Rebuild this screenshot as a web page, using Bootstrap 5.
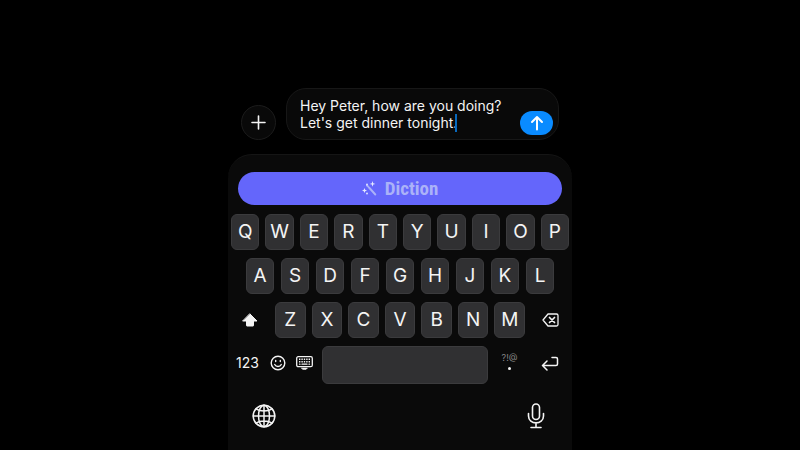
<!DOCTYPE html>
<html lang="en" data-bs-theme="dark">
<head>
<meta charset="utf-8">
<meta name="viewport" content="width=device-width, initial-scale=1">
<title>Diction keyboard</title>
<link href="https://cdn.jsdelivr.net/npm/bootstrap@5.3.0/dist/css/bootstrap.min.css" rel="stylesheet">
<style>
body { background: #000; color: #f4f4f4; font-family: Inter, "Liberation Sans", sans-serif; }
button { color: inherit; background: none; border: 0; padding: 0; }
svg { display: block; fill: none; stroke: currentColor; stroke-linecap: round; stroke-linejoin: round; }
.phone { max-width: 344px; padding-top: 88px; }
.composer { padding: 0 13px; gap: 10px; margin-bottom: 14px; }
.add-btn { width: 35px; height: 35px; background: #090909; border: 1px solid #1c1c1c; }
.bubble { background: #090909; border: 1px solid #171717; border-radius: 20px; padding: 8px 5px 4px 13px; }
.message { display: block; width: 100%; height: 38px; padding: 0; border: 0; outline: 0; resize: none; overflow: hidden; background: transparent; color: #f4f4f4; font-size: 14px; line-height: 17px; }
.caret { left: 168px; top: 25px; width: 2px; height: 18px; background: #0869bd; }
.send-btn { width: 33px; height: 24px; background: #0a8bff; color: #fff; }
.keyboard { background: #0a0a0a; border-top: 1px solid #151515; border-radius: 24px 24px 0 0; padding: 17px 3px 0; }
.diction-btn { height: 33px; margin: 0 7px 9px; gap: 8px; background: #6466fb; color: #abb2f8; font: bold 19px/31px "Liberation Sans Narrow", "Roboto Condensed", Roboto, sans-serif; }
.wand { fill: currentColor; stroke: none; }
.key-row { margin-bottom: 8px; gap: 6px; }
.key { flex: 1 1 0; min-width: 0; height: 36px; background: #303032; border: 1px solid #3b3b3d; border-radius: 6px; font-size: 19px; line-height: 34px; }
.home-row { padding: 0 15px; gap: 7px; }
.side-key { width: 38px; height: 36px; }
.shift-icon { fill: currentColor; }
.bottom-row { gap: 0; }
.num-key { width: 33px; font-size: 14px; line-height: 36px; }
.mini-key { width: 27px; height: 36px; }
.space-key { height: 38px; margin-left: 4px; }
.dot-key { width: 43px; height: 36px; }
.dot-hint { color: #858585; font-size: 9px; line-height: 10px; }
.dot-mark { width: 3px; height: 3px; background: #f4f4f4; margin-top: 4px; }
.bottom-row > button:not(.space-key) { padding-bottom: 4px; }
.bottom-row .num-key { line-height: 32px; }
.bottom-row > .dot-key { padding-bottom: 8px !important; }
.dock { padding: 11px 21px 18px; }
</style>
<script src="https://cdn.jsdelivr.net/npm/bootstrap@5.3.0/dist/js/bootstrap.bundle.min.js"></script>
</head>
<body>
<main class="phone mx-auto min-vh-100 d-flex flex-column">
  <form class="composer d-flex align-items-end">
    <button type="button" class="add-btn rounded-circle d-flex align-items-center justify-content-center flex-shrink-0" aria-label="Add attachment">
      <svg width="15" height="15" viewBox="0 0 15 15" stroke-width="1.6"><path d="M7.5 1v13M1 7.5h13"/></svg>
    </button>
    <div class="bubble position-relative flex-grow-1 d-flex align-items-end">
      <textarea class="message" aria-label="Message" spellcheck="false">Hey Peter, how are you doing?
Let's get dinner tonight.</textarea>
      <span class="caret position-absolute"></span>
      <button type="button" class="send-btn rounded-pill d-flex align-items-center justify-content-center flex-shrink-0" aria-label="Send">
        <svg width="14" height="16" viewBox="0 0 14 16" stroke-width="2"><path d="M7 14.5V2M2 7l5-5 5 5"/></svg>
      </button>
    </div>
  </form>
  <section class="keyboard flex-grow-1 d-flex flex-column" aria-label="Keyboard">
    <button type="button" class="diction-btn rounded-pill d-flex align-items-center justify-content-center">
      <svg class="wand" width="15" height="15" viewBox="0 0 15 15">
        <path d="M5 4.500l1.200 1.200M7 6.500l6.300 7" stroke="currentColor" stroke-width="1.900"/>
        <g fill="#e6eaff"><path d="M10.500 0l.7 2.200 2.200.7-2.200.7-.7 2.200-.7-2.200-2.200-.7 2.200-.7z"/><path d="M2.500 7l.7 1.800 1.800.7-1.800.7-.7 1.800-.7-1.800L0 9.500l1.800-.7z"/><circle cx="5" cy="12.500" r=".9"/><circle cx="5" cy="3.500" r=".9"/></g>
      </svg>
      <span>Diction</span>
    </button>
    <div class="key-row d-flex">
      <button type="button" class="key">Q</button><button type="button" class="key">W</button><button type="button" class="key">E</button><button type="button" class="key">R</button><button type="button" class="key">T</button><button type="button" class="key">Y</button><button type="button" class="key">U</button><button type="button" class="key">I</button><button type="button" class="key">O</button><button type="button" class="key">P</button>
    </div>
    <div class="key-row home-row d-flex">
      <button type="button" class="key">A</button><button type="button" class="key">S</button><button type="button" class="key">D</button><button type="button" class="key">F</button><button type="button" class="key">G</button><button type="button" class="key">H</button><button type="button" class="key">J</button><button type="button" class="key">K</button><button type="button" class="key">L</button>
    </div>
    <div class="key-row d-flex">
      <button type="button" class="side-key d-flex align-items-center justify-content-center" aria-label="Shift">
        <svg class="shift-icon" width="16" height="14" viewBox="0 0 16 14" stroke-width="1"><path d="M8 1l7 7h-3.500v4.500q0 .5-.5.5H5q-.5 0-.5-.5V8H1z"/></svg>
      </button>
      <button type="button" class="key">Z</button><button type="button" class="key">X</button><button type="button" class="key">C</button><button type="button" class="key">V</button><button type="button" class="key">B</button><button type="button" class="key">N</button><button type="button" class="key">M</button>
      <button type="button" class="side-key d-flex align-items-center justify-content-center" aria-label="Delete">
        <svg width="17" height="14" viewBox="0 0 17 14" stroke-width="1.300"><path d="M6 1h8.500q1.500 0 1.500 1.500v9q0 1.500-1.500 1.500H6L1 7z"/><path d="M7.500 4.500l5 5m0-5l-5 5" stroke-width="1.700"/></svg>
      </button>
    </div>
    <div class="key-row bottom-row d-flex align-items-center">
      <button type="button" class="num-key">123</button>
      <button type="button" class="mini-key d-flex align-items-center justify-content-center" aria-label="Emoji">
        <svg width="16" height="16" viewBox="0 0 16 16" stroke-width="1.400"><circle cx="8" cy="8" r="6.800"/><path d="M4.700 9.500c1.400 2.700 5.200 2.700 6.600 0M5.700 5.500v1M10.300 5.500v1"/></svg>
      </button>
      <button type="button" class="mini-key d-flex align-items-center justify-content-center" aria-label="Keyboard layout">
        <svg width="17" height="14" viewBox="0 0 17 14" stroke-width="1.300"><rect x=".7" y=".7" width="15.600" height="10" rx="1.500"/><path d="M3 3.200h11M3 5.700h11" stroke-dasharray="1.400 1" stroke-linecap="butt" stroke-width="1.500"/><path d="M3.500 8.200h.5M6 8.200h5M13 8.200h.5" stroke-width="1.300"/><path d="M5.500 12h6l-1.500 1.500H7z" fill="currentColor" stroke-width=".5"/></svg>
      </button>
      <button type="button" class="key space-key" aria-label="Space"></button>
      <button type="button" class="dot-key d-flex flex-column align-items-center justify-content-center" aria-label="Punctuation">
        <span class="dot-hint">?!@</span><span class="dot-mark rounded-circle"></span>
      </button>
      <button type="button" class="side-key d-flex align-items-center justify-content-center" aria-label="Return">
        <svg width="18" height="15" viewBox="0 0 18 15" stroke-width="1.500"><path d="M11 1.500h4q1.500 0 1.500 1.500v5q0 1.500-1.500 1.500H2M6 5L1.500 9.500 6 14"/></svg>
      </button>
    </div>
    <div class="dock d-flex justify-content-between">
      <button type="button" aria-label="Switch keyboard">
        <svg width="24" height="24" viewBox="0 0 24 24" stroke-width="1.500"><circle cx="12" cy="12" r="10.800"/><ellipse cx="12" cy="12" rx="5.500" ry="10.800"/><path d="M12 1.200v21.600M1.200 12h21.600M4 4.800c4 2.900 12 2.900 16 0M4 19.200c4-2.900 12-2.900 16 0"/></svg>
      </button>
      <button type="button" aria-label="Dictate">
        <svg width="24" height="26" viewBox="0 0 24 26" stroke-width="1.600"><rect x="8.500" y="1" width="7" height="15.500" rx="3.500"/><path d="M4.500 10.500v2.500c0 9.200 15 9.200 15 0v-2.500M12 20v4.500M7 24.500h10"/></svg>
      </button>
    </div>
  </section>
</main>
</body>
</html>
